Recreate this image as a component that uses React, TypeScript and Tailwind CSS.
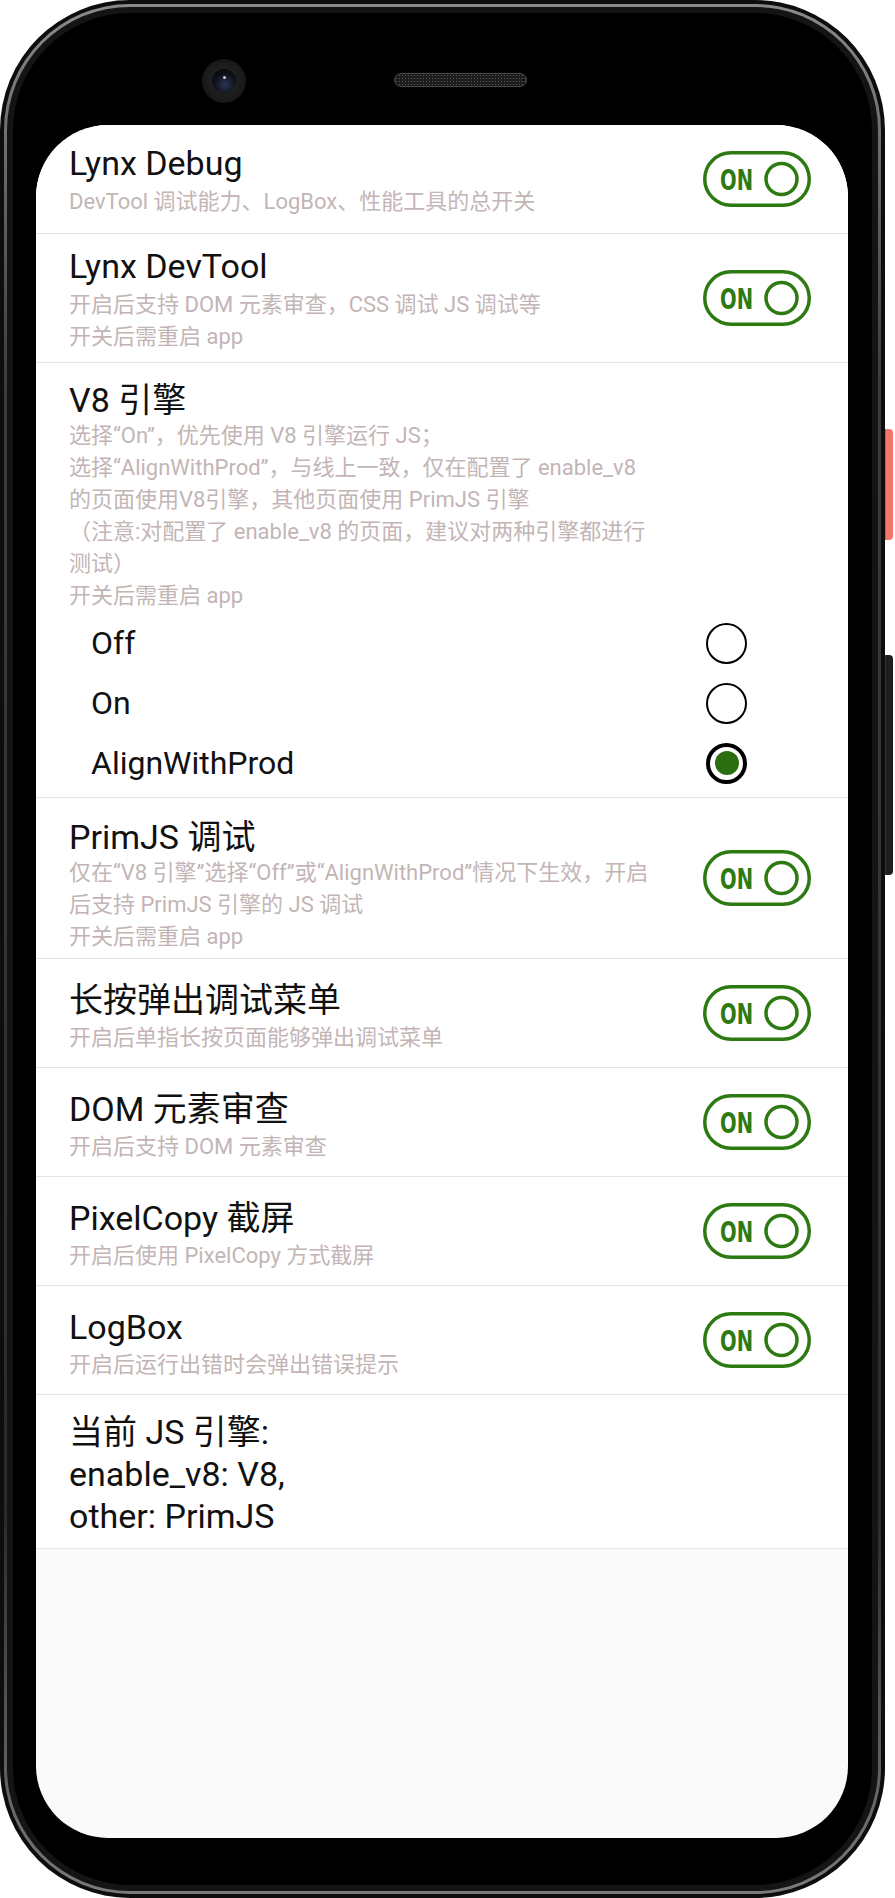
import React from "react";

const GREEN = "#2d7a12";

function Toggle() {
  return (
    <svg width="108" height="56" viewBox="0 0 108 56" className="shrink-0">
      <rect x="1.75" y="1.75" width="104.5" height="52.5" rx="26.25" fill="none" stroke={GREEN} strokeWidth="3.5" />
      <text
        x="17"
        y="39"
        fontFamily="'DejaVu Sans Condensed','Liberation Sans Narrow','DejaVu Sans',sans-serif"
        fontWeight="bold"
        fontSize="29"
        fill={GREEN}
        textLength="33"
        lengthAdjust="spacingAndGlyphs"
      >
        ON
      </text>
      <circle cx="78.5" cy="28" r="15.5" fill="none" stroke={GREEN} strokeWidth="3.5" />
    </svg>
  );
}

function Radio({ checked }: { checked?: boolean }) {
  if (checked) {
    return (
      <div className="w-[41px] h-[41px] rounded-full border-[4px] border-black flex items-center justify-center">
        <div className="w-[24px] h-[24px] rounded-full bg-[#2b6e12]" />
      </div>
    );
  }
  return <div className="w-[41px] h-[41px] rounded-full border-[2.5px] border-black" />;
}

type RowProps = {
  title: string;
  lines: string[];
  pad: string;
  gap: string;
  toggle?: boolean;
  children?: React.ReactNode;
};

function Row({ title, lines, pad, gap, toggle = true, children }: RowProps) {
  return (
    <div className="bg-white border-b border-[#e4e4e4] flex items-center justify-between pl-[33px] pr-[37px]">
      <div className={"flex flex-col flex-1 min-w-0 " + pad}>
        <div className="text-[34px] leading-[40px] text-[#111] whitespace-nowrap">{title}</div>
        <div className={"flex flex-col " + gap}>
          {lines.map((l, i) => (
            <div key={i} className="text-[22px] leading-[32px] text-[#c3b5b5] whitespace-nowrap">
              {l}
            </div>
          ))}
        </div>
        {children}
      </div>
      {toggle && <Toggle />}
    </div>
  );
}

export default function App() {
  const radios = [
    { label: "Off", checked: false },
    { label: "On", checked: false },
    { label: "AlignWithProd", checked: true },
  ];
  return (
    <div className="w-[895px] h-[1898px] bg-white flex font-['Roboto','Noto_Sans_CJK_SC',sans-serif]">
      {/* phone body */}
      <div className="w-[885px] h-[1898px] rounded-[130px] bg-[#0d0d0d] p-[4px]">
        <div className="w-full h-full rounded-[126px] bg-[linear-gradient(180deg,#8a8a8a,#3c3c3c_20%,#2a2a2a_80%,#7a7a7a)] p-[3px]">
          <div className="w-full h-full rounded-[123px] bg-[#141414] p-[6px]">
            <div className="w-full h-full rounded-[117px] bg-black flex flex-col pl-[23px] pr-[24px] pb-[47px]">
              {/* top bezel */}
              <div className="h-[112px] flex items-start shrink-0">
                <div className="mt-[46px] ml-[166px] w-[44px] h-[44px] rounded-full bg-[radial-gradient(circle,#262626_0%,#1c1c1c_55%,#0c0c0c_100%)] flex items-center justify-center">
                  <div className="w-[24px] h-[24px] rounded-full bg-[radial-gradient(circle_at_55%_65%,#2b3556_0%,#0e1018_55%,#050505_100%)] flex items-start justify-center pt-[7px]">
                    <div className="w-[3px] h-[3px] rounded-full bg-[#cfcfcf]" />
                  </div>
                </div>
                <div className="mt-[60px] ml-[148px] w-[133px] h-[14px] rounded-full border border-[#4a4a4a] bg-[#1c1c1c] bg-[radial-gradient(#5e5e5e_0.8px,transparent_1px)] bg-[length:3px_3px]" />
              </div>
              {/* screen */}
              <div className="w-[812px] flex-1 rounded-[72px] overflow-hidden bg-[#fafafa] flex flex-col">
                <Row
                  title="Lynx Debug"
                  lines={["DevTool 调试能力、LogBox、性能工具的总开关"]}
                  pad="pt-[18px] pb-[15px]"
                  gap="mt-[3px]"
                />
                <Row
                  title="Lynx DevTool"
                  lines={["开启后支持 DOM 元素审查，CSS 调试 JS 调试等", "开关后需重启 app"]}
                  pad="pt-[12px] pb-[9px]"
                  gap="mt-[3px]"
                />
                <Row
                  title="V8 引擎"
                  lines={[
                    "选择“On”，优先使用 V8 引擎运行 JS；",
                    "选择“AlignWithProd”，与线上一致，仅在配置了 enable_v8",
                    "的页面使用V8引擎，其他页面使用 PrimJS 引擎",
                    "（注意:对配置了 enable_v8 的页面，建议对两种引擎都进行",
                    "测试）",
                    "开关后需重启 app",
                  ]}
                  pad="pt-[17px] pb-[4px]"
                  gap="mt-[0px]"
                  toggle={false}
                >
                  <div className="flex flex-col mt-[1px]">
                    {radios.map((r) => (
                      <div key={r.label} className="h-[60px] flex items-center justify-between pl-[22px] pr-[64px]">
                        <span className="text-[32px] leading-[40px] text-[#111]">{r.label}</span>
                        <Radio checked={r.checked} />
                      </div>
                    ))}
                  </div>
                </Row>
                <Row
                  title="PrimJS 调试"
                  lines={[
                    "仅在“V8 引擎”选择“Off”或“AlignWithProd”情况下生效，开启",
                    "后支持 PrimJS 引擎的 JS 调试",
                    "开关后需重启 app",
                  ]}
                  pad="pt-[19px] pb-[5px]"
                  gap="mt-[0px]"
                />
                <Row title="长按弹出调试菜单" lines={["开启后单指长按页面能够弹出调试菜单"]} pad="pt-[21px] pb-[13px]" gap="mt-[2px]" />
                <Row title="DOM 元素审查" lines={["开启后支持 DOM 元素审查"]} pad="pt-[21px] pb-[13px]" gap="mt-[2px]" />
                <Row title="PixelCopy 截屏" lines={["开启后使用 PixelCopy 方式截屏"]} pad="pt-[21px] pb-[13px]" gap="mt-[2px]" />
                <Row title="LogBox" lines={["开启后运行出错时会弹出错误提示"]} pad="pt-[21px] pb-[13px]" gap="mt-[2px]" />
                <div className="bg-white border-b border-[#e4e4e4] pl-[33px] pt-[16px] pb-[11px] text-[34px] leading-[42px] text-[#111]">
                  <div>当前 JS 引擎:</div>
                  <div>enable_v8: V8,</div>
                  <div>other: PrimJS</div>
                </div>
              </div>
            </div>
          </div>
        </div>
      </div>
      {/* side buttons */}
      <div className="w-[10px] flex flex-col">
        <div className="mt-[429px] w-[8px] h-[111px] rounded-r-[4px] bg-[#f4776a] border-l border-[#c85a50]" />
        <div className="mt-[115px] w-[8px] h-[220px] rounded-r-[4px] bg-[#1e1e1e] border-l border-[#333]" />
      </div>
    </div>
  );
}
